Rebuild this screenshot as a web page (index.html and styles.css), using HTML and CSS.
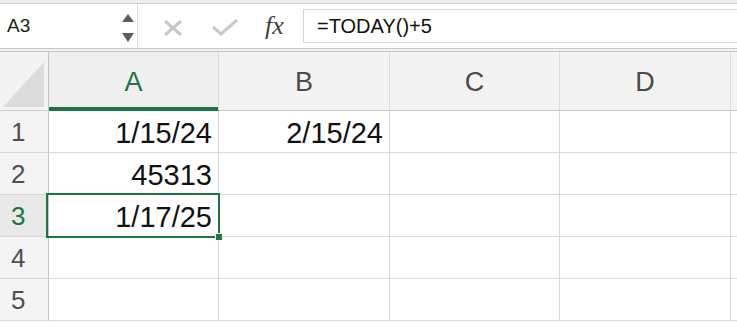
FILE: index.html
```html
<!DOCTYPE html>
<html>
<head>
    <meta charset="UTF-8" name="viewport" content="width=device-width, initial-scale=1.0"/>
    <title>Sheet</title>
    <link rel="stylesheet" href="styles.css">
</head>
<body>
    <div class="topstrip"></div>
    <div class="toolbar">
        <div class="namebox">
            <span class="ref">A3</span>
            <svg class="spin" width="14" height="30" viewBox="0 0 14 30">
                <path d="M1 9 L7 1 L13 9 Z" fill="#5c5c5c"/>
                <path d="M1 20 L13 20 L7 29 Z" fill="#5c5c5c"/>
            </svg>
        </div>
        <div class="actions">
            <svg class="icon-x" width="20" height="16" viewBox="0 0 20 16">
                <path d="M2 1 L18 15 M18 1 L2 15" stroke="#c6c6c6" stroke-width="3" fill="none"/>
            </svg>
            <svg class="icon-ok" width="26" height="18" viewBox="0 0 26 18">
                <path d="M1 9 L9 16 L25 2" stroke="#c9c9c9" stroke-width="3" fill="none"/>
            </svg>
            <span class="fx">fx</span>
        </div>
        <div class="formula">=TODAY()+5</div>
    </div>
    <div class="sep"></div>

    <div class="sheet">
        <div class="corner">
            <svg width="42" height="45" viewBox="0 0 42 45"><path d="M0 45 L41 0 L41 45 Z" fill="#dcdcdc"/></svg>
        </div>
        <div class="colhead active">A</div>
        <div class="colhead">B</div>
        <div class="colhead">C</div>
        <div class="colhead">D</div>
        <div class="colhead edge"></div>

        <div class="rowhead">1</div>
        <div class="cell">1/15/24</div>
        <div class="cell">2/15/24</div>
        <div class="cell"></div>
        <div class="cell"></div>
        <div class="cell edge"></div>

        <div class="rowhead">2</div>
        <div class="cell">45313</div>
        <div class="cell"></div>
        <div class="cell"></div>
        <div class="cell"></div>
        <div class="cell edge"></div>

        <div class="rowhead active">3</div>
        <div class="cell selected">1/17/25<div class="selbox"><div class="handle"></div></div></div>
        <div class="cell"></div>
        <div class="cell"></div>
        <div class="cell"></div>
        <div class="cell edge"></div>

        <div class="rowhead">4</div>
        <div class="cell"></div>
        <div class="cell"></div>
        <div class="cell"></div>
        <div class="cell"></div>
        <div class="cell edge"></div>

        <div class="rowhead">5</div>
        <div class="cell"></div>
        <div class="cell"></div>
        <div class="cell"></div>
        <div class="cell"></div>
        <div class="cell edge"></div>
    </div>
</body>
</html>
```

FILE: styles.css
```css
* {
    box-sizing: border-box;
}
body {
    margin: 0;
    background: #ffffff;
    font-family: "Liberation Sans", Arial, sans-serif;
    color: #111111;
    overflow: hidden;
}
.topstrip {
    height: 4px;
    background: #ececec;
    border-bottom: 1px solid #d2d2d2;
}
.toolbar {
    display: flex;
    height: 45px;
    background: #ffffff;
    border-bottom: 1px solid #c9c9c9;
}
.namebox {
    width: 138px;
    display: flex;
    align-items: center;
    justify-content: space-between;
    padding: 0 2px 0 7px;
    border-right: 1px solid #d9d9d9;
}
.ref {
    font-size: 19px;
    color: #222222;
}
.spin {
    margin-top: 4px;
}
.actions {
    width: 165px;
    display: flex;
    align-items: center;
    padding-left: 25px;
}
.icon-x {
    margin-top: 4px;
}
.icon-ok {
    margin-left: 29px;
    margin-top: 2px;
}
.fx {
    margin-left: 27px;
    font-family: "Liberation Serif", "Times New Roman", serif;
    font-style: italic;
    font-size: 26px;
    color: #3f3f3f;
}
.formula {
    flex: 1;
    margin-top: 5px;
    height: 34px;
    border: 1px solid #d6d6d6;
    border-right: none;
    padding-left: 13px;
    display: flex;
    align-items: center;
    font-size: 20px;
    color: #111111;
}
.sep {
    height: 3px;
    background: #f1f1f1;
    border-bottom: 1px solid #c9c9c9;
}
.sheet {
    display: grid;
    grid-template-columns: 49px 170px 171px 170px 171px 1fr;
    grid-template-rows: 59px;
    grid-auto-rows: 42px;
}
.corner {
    background: #f3f3f3;
    border-right: 1px solid #c4c4c4;
    border-bottom: 1px solid #cfcfcf;
    padding: 10px 0 0 3px;
}
.corner svg {
    display: block;
}
.colhead {
    background: #f3f3f3;
    border-right: 1px solid #dadada;
    border-bottom: 1px solid #c8c8c8;
    display: flex;
    align-items: center;
    justify-content: center;
    padding-top: 2px;
    font-size: 27px;
    color: #4a4a4a;
}
.colhead.active {
    color: #217346;
    background: #efefef;
    box-shadow: inset 0 -3px 0 #217346;
    border-bottom-color: #217346;
}
.colhead.edge {
    border-right: none;
}
.rowhead {
    background: #f4f4f4;
    border-right: 1px solid #c4c4c4;
    border-bottom: 1px solid #dadada;
    display: flex;
    align-items: center;
    padding: 2px 0 0 11px;
    font-size: 26px;
    color: #4f4f4f;
}
.rowhead.active {
    background: #e9e9e9;
    color: #217346;
}
.cell {
    border-right: 1px solid #d9d9d9;
    border-bottom: 1px solid #d9d9d9;
    display: flex;
    align-items: center;
    justify-content: flex-end;
    padding: 3px 6px 0 0;
    font-size: 29px;
    color: #111111;
}
.cell.edge {
    border-right: none;
}
.cell.selected {
    position: relative;
}
.selbox {
    position: absolute;
    top: -2px;
    left: -3px;
    right: -2px;
    bottom: -2px;
    border: 2px solid #217346;
}
.handle {
    position: absolute;
    right: -5px;
    bottom: -5px;
    width: 8px;
    height: 8px;
    background: #217346;
    border: 1px solid #ffffff;
}
```
